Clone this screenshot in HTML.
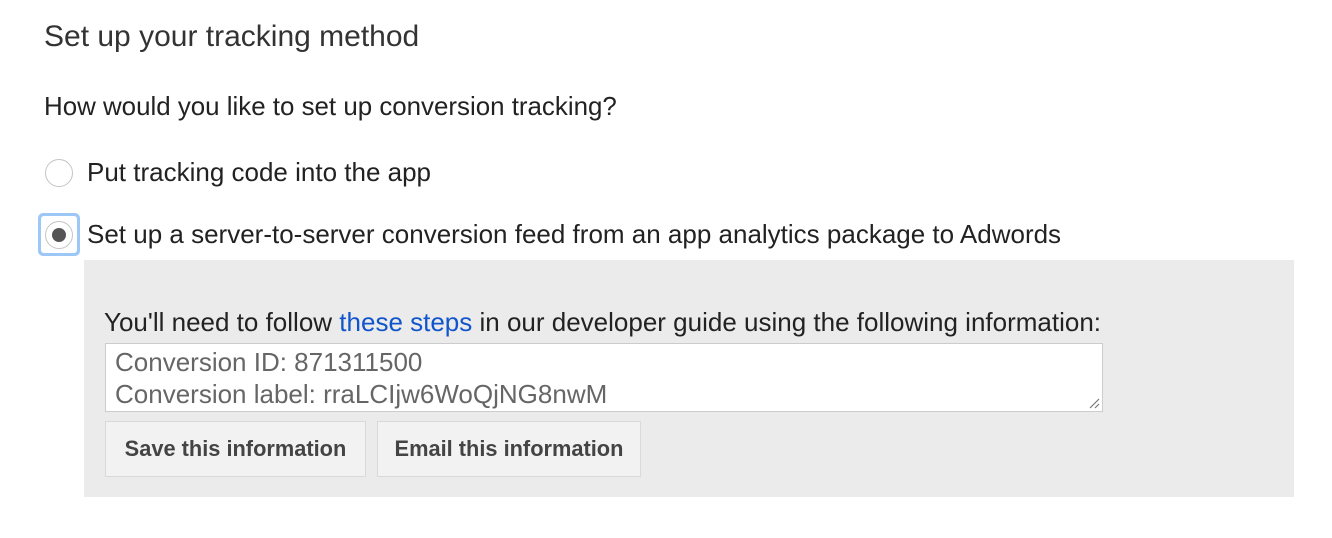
<!DOCTYPE html>
<html><head><style>
body{margin:0;width:1332px;height:538px;background:#fff;font-family:"Liberation Sans",Arial,sans-serif;color:#222;position:relative;overflow:hidden}
.a{position:absolute;white-space:nowrap}
.r{position:absolute;width:28px;height:28px;border:1.5px solid #c4c4c4;border-radius:50%;box-sizing:border-box;background:#fff}
.btn{position:absolute;top:421px;height:56px;background:#f2f2f2;border:1px solid #d9d9d9;box-sizing:border-box;font-weight:bold;font-size:21.8px;color:#444;display:flex;align-items:center;justify-content:center}
</style></head><body>
<div class="a" style="left:44px;top:20px;font-size:30px;color:#333">Set up your tracking method</div>
<div class="a" style="left:44px;top:93px;font-size:25.9px">How would you like to set up conversion tracking?</div>
<div class="r" style="left:45px;top:159px"></div>
<div class="a" style="left:87px;top:157px;font-size:26px">Put tracking code into the app</div>
<div style="position:absolute;left:38px;top:213px;width:42px;height:43px;border-radius:5px;background:#9cc7f7;"></div>
<div style="position:absolute;left:41px;top:216px;width:36px;height:37px;border-radius:3px;background:#fff;"></div>
<div class="r" style="left:45px;top:221px"></div>
<div style="position:absolute;left:52px;top:228px;width:14px;height:14px;border-radius:50%;background:#555"></div>
<div class="a" style="left:87px;top:219px;font-size:26px">Set up a server-to-server conversion feed from an app analytics package to Adwords</div>
<div style="position:absolute;left:84px;top:260px;width:1210px;height:237px;background:#ebebeb"></div>
<div class="a" style="left:104px;top:307px;font-size:26px">You'll need to follow <span style="color:#1155cc">these steps</span> in our developer guide using the following information:</div>
<div style="position:absolute;left:105px;top:343px;width:998px;height:69px;background:#fff;border:1px solid #ccc;box-sizing:border-box;font-size:26px;color:#666;line-height:32px;padding:2px 0 0 9px;white-space:nowrap">Conversion ID: 871311500<br>Conversion label: rraLCIjw6WoQjNG8nwM
<svg style="position:absolute;right:2px;bottom:2px" width="12" height="12"><path d="M11 2L2 11M11 7L7 11" stroke="#777" stroke-width="1.2"/></svg></div>
<div class="btn" style="left:105px;width:261px">Save this information</div>
<div class="btn" style="left:377px;width:264px">Email this information</div>
</body></html>
